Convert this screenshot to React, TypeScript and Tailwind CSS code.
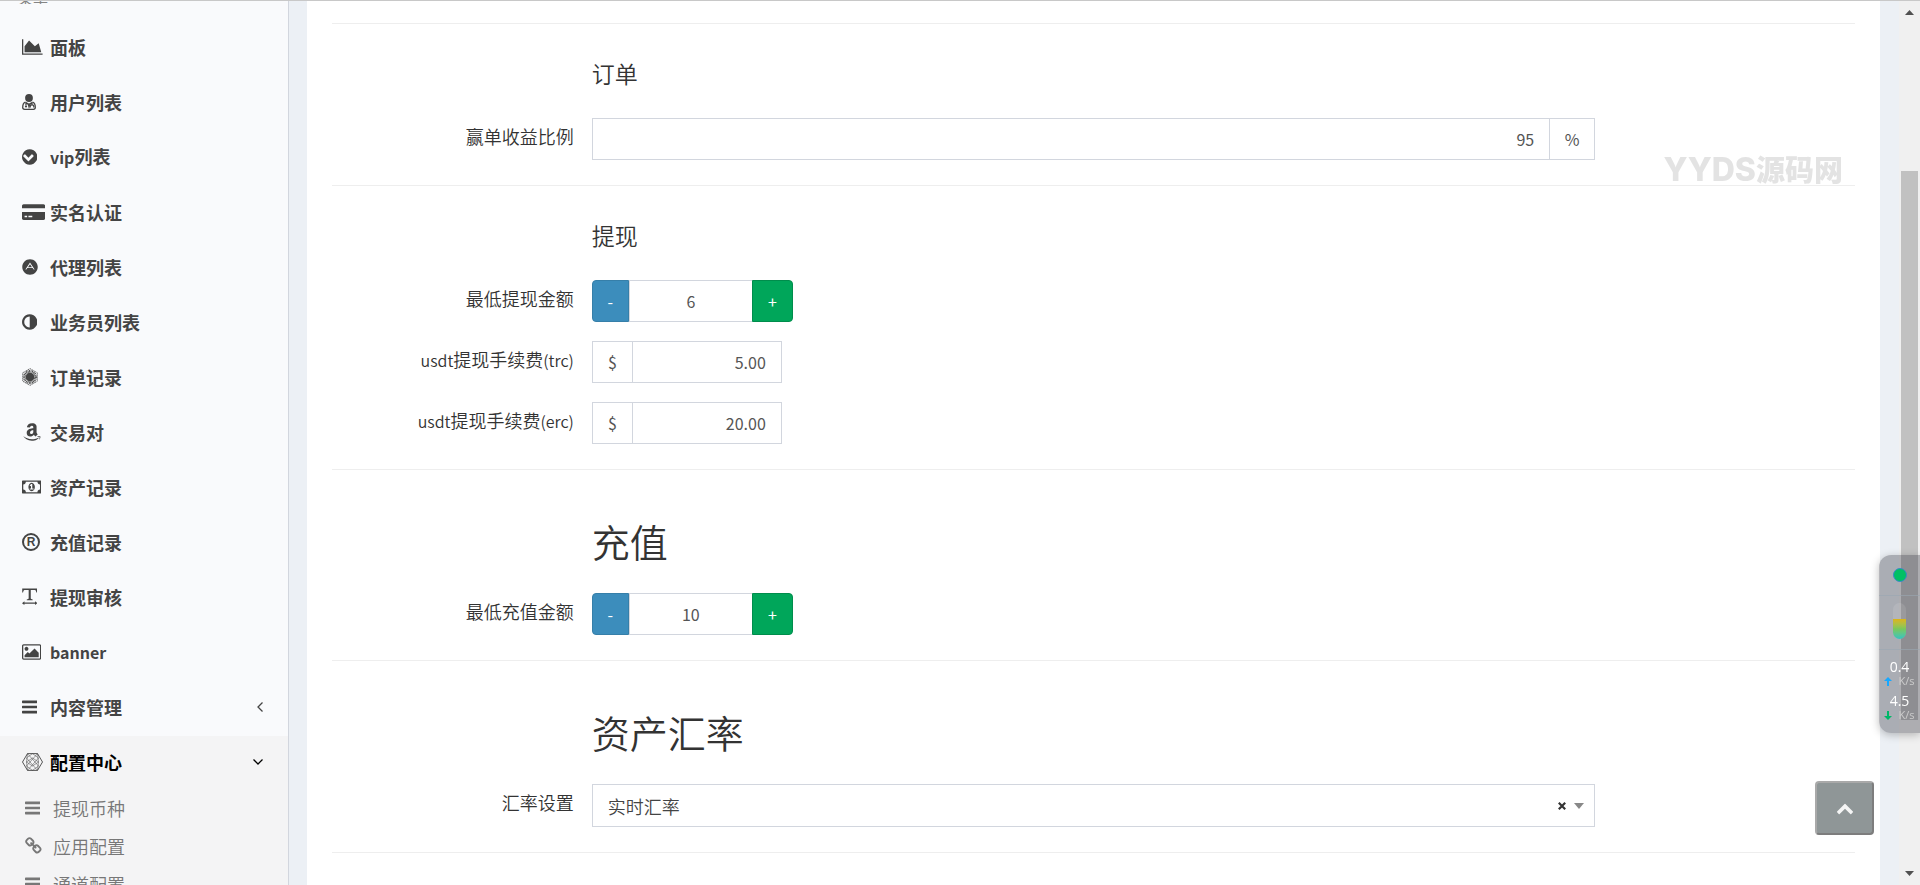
import { useState, type ReactNode } from "react";
import { FaAdn, FaAmazon } from "react-icons/fa";

const glyphs = {
  area: {
    box: "-128 0 2048 1792",
    d: "M1920 1536v128h-2048v-1536h128v1408h1920zm-384-1024l256 896h-1664v-576l448-576 576 576z",
  },
  chevronCircle: {
    box: "128 0 1536 1792",
    d: "M813 1299l454-454q19-19 19-45t-19-45l-102-102q-19-19-45-19t-45 19l-307 307-307-307q-19-19-45-19t-45 19l-102 102q-19 19-19 45t19 45l454 454q19 19 45 19t45-19zm851-403q0 209-103 385.5t-279.5 279.5-385.5 103-385.5-103-279.5-279.5-103-385.5 103-385.5 279.5-279.5 385.5-103 385.5 103 279.5 279.5 103 385.5z",
  },
  card: {
    box: "0 0 2304 1792",
    d: "M0 1536v-640h2304v640q0 66-47 113t-113 47h-1984q-66 0-113-47t-47-113zM640 1408h384v-128h-384v128zM256 1408h256v-128h-256v128zM2144 128q66 0 113 47t47 113v224h-2304v-224q0-66 47-113t113-47z",
  },
  adjust: {
    box: "128 0 1536 1792",
    d: "M896 1440v-1088q-148 0-273 73t-198 198-73 273 73 273 198 198 273 73zm768-544q0 209-103 385.5t-279.5 279.5-385.5 103-385.5-103-279.5-279.5-103-385.5 103-385.5 279.5-279.5 385.5-103 385.5 103 279.5 279.5 103 385.5z",
  },
  money: {
    box: "-64 0 1920 1792",
    d: "M704 1152h384v-96h-128v-448h-114l-148 137 77 80q42-37 55-57h2v288h-128v96zm512-256q0 70-21 142t-59.5 134-101.5 101-138 39-138-39-101.5-101-59.5-134-21-142 21-142 59.5-134 101.5-101 138-39 138 39 101.5 101 59.5 134 21 142zm512 256v-512q-106 0-181-75t-75-181h-1152q0 106-75 181t-181 75v512q106 0 181 75t75 181h1152q0-106 75-181t181-75zm128-832v1152q0 26-19 45t-45 19h-1792q-26 0-45-19t-19-45v-1152q0-26 19-45t45-19h1792q26 0 45 19t19 45z",
  },
  textWidth: {
    box: "128 0 1536 1792",
    d: "M150 60h1490v400h-80q-30-270-130-270h-430v850q0 70 190 100v80h-588v-80q190-30 190-100v-850h-430q-100 0-130 270h-82zM128 1510l240-190v120h1056v-120l240 190-240 190v-120h-1056v120z",
  },
  picture: {
    box: "-64 0 1920 1792",
    d: "M576 576q0 80-56 136t-136 56-136-56-56-136 56-136 136-56 136 56 56 136zm1024 384v448h-1408v-192l320-320 160 160 512-512zm96-704h-1600q-13 0-22.5 9.5t-9.5 22.5v1216q0 13 9.5 22.5t22.5 9.5h1600q13 0 22.5-9.5t9.5-22.5v-1216q0-13-9.5-22.5t-22.5-9.5zm160 32v1216q0 66-47 113t-113 47h-1600q-66 0-113-47t-47-113v-1216q0-66 47-113t113-47h1600q66 0 113 47t47 113z",
  },
  bars: {
    box: "128 0 1536 1792",
    d: "M192 256h1408q64 0 64 64v128q0 64-64 64h-1408q-64 0-64-64v-128q0-64 64-64zM192 768h1408q64 0 64 64v128q0 64-64 64h-1408q-64 0-64-64v-128q0-64 64-64zM192 1280h1408q64 0 64 64v128q0 64-64 64h-1408q-64 0-64-64v-128q0-64 64-64z",
  },
  link: {
    box: "64 0 1664 1792",
    d: "M1520 1216q0-40-28-68l-208-208q-28-28-68-28-42 0-72 32 3 3 19 18.5t21.5 21.5 15 19 13 25.5 3.5 27.5q0 40-28 68t-68 28q-15 0-27.5-3.5t-25.5-13-19-15-21.5-21.5-18.5-19q-33 31-33 73 0 40 28 68l206 207q27 27 68 27 40 0 68-26l147-146q28-28 28-67zm-703-705q0-40-28-68l-206-207q-28-28-68-28-39 0-68 27l-147 146q-28 28-28 67 0 40 28 68l208 208q27 27 68 27 42 0 72-31-3-3-19-18.5t-21.5-21.5-15-19-13-25.5-3.5-27.5q0-40 28-68t68-28q15 0 27.5 3.5t25.5 13 19 15 21.5 21.5 18.5 19q33-31 33-73zm895 705q0 120-85 203l-147 146q-83 83-203 83-121 0-204-85l-206-207q-83-83-83-203 0-123 88-209l-88-88q-86 88-208 88-120 0-204-84l-208-208q-84-84-84-204t85-203l147-146q83-83 203-83 121 0 204 85l206 207q83 83 83 203 0 123-88 209l88 88q86-88 208-88 120 0 204 84l208 208q84 84 84 204z",
  },
  chevronUp: {
    box: "0 0 1792 1792",
    d: "M1683 1331l-166 165q-19 19-45 19t-45-19l-531-531-531 531q-19 19-45 19t-45-19l-166-165q-19-19-19-45.5t19-45.5l742-741q19-19 45-19t45 19l742 741q19 19 19 45.5t-19 45.5z",
  },
};

function Glyph({ name, className = "h-[18px]" }: { name: keyof typeof glyphs; className?: string }) {
  return (
    <svg viewBox={glyphs[name].box} fill="currentColor" fillRule="evenodd" className={`w-auto ${className}`} aria-hidden="true">
      <path d={glyphs[name].d} />
    </svg>
  );
}

function DoctorIcon() {
  return (
    <svg viewBox="0 0 14 16" className="h-4 w-3.5" fill="none" stroke="currentColor" strokeWidth="1.3">
      <circle cx="7" cy="4" r="3.9" fill="currentColor" stroke="none" />
      <path d="M3.4 8.2C1.500 8.800 0.700 10.800 0.700 13.500c0 1.200 0.800 1.800 1.900 1.800h8.800c1.100 0 1.900-0.600 1.900-1.800 0-2.700-0.800-4.700-2.700-5.300" />
      <path d="M3.4 8.400l3.600 2 3.600-2M4 8.500v3M10 8.500v2.500M8.200 13.500v-1.200c0-1 0.800-1.500 1.800-1.500s1.800 0.500 1.800 1.500v1.200" />
      <circle cx="4" cy="12.500" r="1.100" fill="currentColor" stroke="none" />
      <path d="M5.500 10l1.500 5 1.500-5z" fill="currentColor" stroke="none" />
    </svg>
  );
}

function OrderIcon() {
  return (
    <svg viewBox="0 0 16 18" className="h-[18px] w-4" fill="none" stroke="currentColor">
      <path d="M8 0.600l7.300 4.200v8.400L8 17.400 0.700 13.200V4.800z" strokeWidth="0.8" strokeDasharray="1.400 0.600" />
      <circle cx="8" cy="9" r="5.600" strokeWidth="2.600" strokeDasharray="0.900 0.560" />
      <circle cx="8" cy="9" r="4.300" fill="currentColor" stroke="none" />
    </svg>
  );
}

function MeshIcon() {
  return (
    <svg viewBox="0 0 21 18" className="h-[18px] w-[21px]" fill="none" stroke="currentColor" strokeWidth="0.700">
      <path d="M5.500 0.600h10L20.500 9l-5 8.400h-10L0.500 9z" strokeWidth="0.900" />
      <path d="M5.500 0.600L4.500 9l1 8.400M15.500 0.600L16.500 9l-1 8.400M4.500 5l6-4.400 6 4.400M4.500 13l6 4.400 6-4.400" strokeWidth="0.500" />
      <path d="M5.500 0.600l11 12.400M15.500 0.600L4.500 13M4.500 5l11 12.400M16.500 5L5.500 17.400M4.500 9l6-4 6 4-6 4z" strokeWidth="0.500" />
    </svg>
  );
}

function RegisteredIcon() {
  return (
    <span className="flex size-[18px] items-center justify-center rounded-full border-2 border-[#444] font-['Liberation_Sans',sans-serif] text-[12px] leading-none font-bold">
      R
    </span>
  );
}

const menuItems: { title: string; icon: ReactNode; arrow?: boolean }[] = [
  { title: "面板", icon: <Glyph name="area" /> },
  { title: "用户列表", icon: <DoctorIcon /> },
  { title: "vip列表", icon: <Glyph name="chevronCircle" /> },
  { title: "实名认证", icon: <Glyph name="card" /> },
  { title: "代理列表", icon: <FaAdn className="size-4" /> },
  { title: "业务员列表", icon: <Glyph name="adjust" /> },
  { title: "订单记录", icon: <OrderIcon /> },
  { title: "交易对", icon: <FaAmazon className="h-5 w-auto" /> },
  { title: "资产记录", icon: <Glyph name="money" /> },
  { title: "充值记录", icon: <RegisteredIcon /> },
  { title: "提现审核", icon: <Glyph name="textWidth" /> },
  { title: "banner", icon: <Glyph name="picture" /> },
  { title: "内容管理", icon: <Glyph name="bars" />, arrow: true },
];

const subItems: { title: string; icon: ReactNode }[] = [
  { title: "提现币种", icon: <Glyph name="bars" /> },
  { title: "应用配置", icon: <Glyph name="link" /> },
  { title: "通道配置", icon: <Glyph name="bars" /> },
];

// latin letters run one step smaller than the hanzi beside them
function Mixed({ text }: { text: string }) {
  return (
    <span>
      {text.split(/([\x20-\x7e]+)/).map((part, i) =>
        i % 2 ? <span key={i} className="text-[16px]">{part}</span> : part
      )}
    </span>
  );
}

function Sidebar() {
  return (
    <aside className="w-[289px] shrink-0 overflow-hidden border-r border-[#d2d6de] bg-[#f9fafc]">
      <div className="h-5">
        <div className="flex h-[3px] items-end overflow-hidden pl-[18px] text-[15px] leading-3 text-[#848484]">菜单</div>
      </div>
      <nav>
        <ul>
          {menuItems.map((item) => (
            <li key={item.title}>
              <a href="#" className="flex h-[55px] items-center pr-[25px] pb-1 pl-[22px] font-bold text-[#444]">
                <span className="w-7 shrink-0">{item.icon}</span>
                <Mixed text={item.title} />
                {item.arrow && (
                  <svg viewBox="0 0 6 10" className="ml-auto h-2.5 w-1.5" fill="none" stroke="currentColor" strokeWidth="1.3">
                    <path d="M5.5 0.5L1 5l4.5 4.5" />
                  </svg>
                )}
              </a>
            </li>
          ))}
          <li className="bg-[#f4f4f5]">
            <a href="#" className="flex h-[55px] items-center pr-[25px] pb-1 pl-[22px] font-bold text-black">
              <span className="w-7 shrink-0 text-[#444]">
                <MeshIcon />
              </span>
              <span>配置中心</span>
              <svg viewBox="0 0 10 6" className="ml-auto h-1.5 w-2.5" fill="none" stroke="currentColor" strokeWidth="1.3">
                <path d="M0.5 0.5L5 5l4.5-4.5" />
              </svg>
            </a>
            <ul>
              {subItems.map((item) => (
                <li key={item.title}>
                  <a href="#" className="flex h-[38px] items-center pb-1 pl-[25px] font-[350] text-[#777]">
                    <span className="w-7 shrink-0">{item.icon}</span>
                    <span>{item.title}</span>
                  </a>
                </li>
              ))}
            </ul>
          </li>
        </ul>
      </nav>
    </aside>
  );
}

function Row({ label, id, children }: { label: string; id: string; children: ReactNode }) {
  return (
    <div className="grid grid-cols-12">
      <label htmlFor={id} className="col-span-2 pt-[5px] pr-0.5 text-right font-[350] text-[#333]">
        <Mixed text={label} />
      </label>
      <div className="col-span-8 px-4">{children}</div>
    </div>
  );
}

function Section({ title, large = false, children }: { title: string; large?: boolean; children: ReactNode }) {
  return (
    <section className={`mx-[15px] border-b border-[#eee] pb-[25px] ${large ? "pt-[46px]" : "pt-8"}`}>
      <div className="-mx-[15px]">
        <div className="grid grid-cols-12">
          <h4
            className={`col-span-8 col-start-3 px-4 font-[350] text-[#333] ${
              large ? "mb-[27px] text-[38px] leading-[50px]" : "mb-7 text-[23px] leading-[34px]"
            }`}
          >
            {title}
          </h4>
        </div>
        <div className="flex flex-col gap-[19px]">{children}</div>
      </div>
    </section>
  );
}

const fieldText = "text-[16px] text-[#555]";

function Stepper({ id, initial }: { id: string; initial: number }) {
  const [value, setValue] = useState(initial);
  return (
    <div className="flex h-[42px] w-[201px] text-[16px]">
      <button
        type="button"
        onClick={() => setValue(value - 1)}
        className="w-[37px] shrink-0 rounded-l-[4px] border border-[#367fa9] bg-[#3c8dbc] text-white"
      >
        -
      </button>
      <input
        id={id}
        value={value}
        onChange={(e) => setValue(Number(e.target.value) || 0)}
        className={`min-w-0 flex-1 border-y border-l border-[#d2d6de] bg-white text-center ${fieldText}`}
      />
      <button
        type="button"
        onClick={() => setValue(value + 1)}
        className="w-[41px] shrink-0 rounded-r-[4px] border border-[#008d4c] bg-[#00a65a] text-white"
      >
        +
      </button>
    </div>
  );
}

function FeeInput({ id, value }: { id: string; value: string }) {
  return (
    <div className="flex h-[42px] w-[190px] border border-[#d2d6de]">
      <span className={`flex w-10 shrink-0 items-center justify-center border-r border-[#d2d6de] ${fieldText}`}>$</span>
      <input id={id} defaultValue={value} className={`min-w-0 flex-1 bg-white pr-[15px] text-right ${fieldText}`} />
    </div>
  );
}

function RateSelect() {
  return (
    <div className="relative">
      <select
        id="rate"
        className="h-[43px] w-full appearance-none border border-[#d2d6de] bg-white px-[15px] font-[350] text-[#444]"
      >
        <option>实时汇率</option>
      </select>
      <div className="pointer-events-none absolute inset-y-0 right-[11px] flex items-center gap-2">
        <svg viewBox="0 0 8 8" className="size-2" stroke="#333" strokeWidth="2.2">
          <path d="M0.8 0.8l6.4 6.4M7.2 0.8L0.8 7.2" />
        </svg>
        <svg viewBox="0 0 10 6" className="h-1.5 w-2.5" fill="#888">
          <path d="M0 0h10L5 6z" />
        </svg>
      </div>
    </div>
  );
}

function Scrollbar() {
  return (
    <div className="flex w-[21px] shrink-0 flex-col items-center bg-[#f0f0f0] py-[9px]">
      <svg viewBox="0 0 9 5" className="h-[5px] w-[9px]" fill="#505050">
        <path d="M4.5 0L9 5H0z" />
      </svg>
      <div className="mt-[156px] h-[549px] w-[17px] bg-[#c1c1c1]" />
      <svg viewBox="0 0 9 5" className="mt-auto h-[5px] w-[9px]" fill="#505050">
        <path d="M4.5 5L9 0H0z" />
      </svg>
    </div>
  );
}

function NetSpeed({ value, up = false }: { value: string; up?: boolean }) {
  return (
    <div className="flex flex-col items-center text-white">
      <span className="text-[14px] leading-4">{value}</span>
      <span className="flex items-center gap-1.5 text-[11px] leading-3 text-[#ccc]">
        <svg viewBox="0 0 8 9" className="h-[9px] w-2" fill={up ? "#18a8ff" : "#00b868"}>
          {up ? <path d="M4 0l4 4H5v5H3V4H0z" /> : <path d="M4 9L0 5h3V0h2v5h3z" />}
        </svg>
        K/s
      </span>
    </div>
  );
}

function SpeedWidget() {
  return (
    <div className="fixed top-[555px] right-0 flex h-[178px] w-[41px] flex-col items-center rounded-l-xl bg-[rgba(50,50,60,0.35)] pt-[13px] font-['Open_Sans',sans-serif] shadow-[0_2px_8px_rgba(0,0,0,0.25)]">
      <span className="size-3.5 rounded-full border border-[#3a86c8] bg-[#00c064]" />
      <span className="mt-[13px] h-px w-full bg-[#9aa6b0]/60" />
      <span className="mt-[7px] flex h-9 w-[13px] items-end overflow-hidden rounded-full bg-white/10">
        <span className="h-5 w-full bg-linear-to-b from-[#dcb414] via-[#78c85a] to-[#32c3be]" />
      </span>
      <span className="mt-2.5 mb-[9px] h-px w-full bg-[#9aa6b0]/60" />
      <div className="flex flex-col gap-1.5">
        <NetSpeed value="0.4" up />
        <NetSpeed value="4.5" />
      </div>
    </div>
  );
}

export default function App() {
  return (
    <div className="flex h-screen overflow-hidden border-t border-[#c8c8c8] bg-[#ecf0f5] font-['Noto_Sans_CJK_SC',sans-serif] text-[18px] leading-[26px]">
      <Sidebar />
      <main className="min-w-0 flex-1 overflow-hidden pr-[19px] pl-[18px]">
        <form className="min-h-full bg-white px-[10px]">
          <div className="mx-[15px] h-[23px] border-b border-[#eee]" />
          <Section title="订单">
            <Row label="赢单收益比例" id="ratio">
              <div className="flex h-[42px] border border-[#d2d6de]">
                <input id="ratio" defaultValue="95" className={`min-w-0 flex-1 bg-white pr-[15px] text-right ${fieldText}`} />
                <span className={`flex w-[45px] shrink-0 items-center justify-center border-l border-[#d2d6de] ${fieldText}`}>%</span>
              </div>
            </Row>
          </Section>
          <Section title="提现">
            <Row label="最低提现金额" id="min-withdraw">
              <Stepper id="min-withdraw" initial={6} />
            </Row>
            <Row label="usdt提现手续费(trc)" id="fee-trc">
              <FeeInput id="fee-trc" value="5.00" />
            </Row>
            <Row label="usdt提现手续费(erc)" id="fee-erc">
              <FeeInput id="fee-erc" value="20.00" />
            </Row>
          </Section>
          <Section title="充值" large>
            <Row label="最低充值金额" id="min-recharge">
              <Stepper id="min-recharge" initial={10} />
            </Row>
          </Section>
          <Section title="资产汇率" large>
            <Row label="汇率设置" id="rate">
              <RateSelect />
            </Row>
          </Section>
        </form>
      </main>
      <Scrollbar />

      <div className="pointer-events-none fixed top-[147px] right-[77px] text-[29px] leading-[42px] font-black text-[#e3e3e3]">
        <span className="font-['Inter',sans-serif] text-[32px] font-extrabold">YYDS</span>源码网
      </div>
      <button
        type="button"
        aria-label="返回顶部"
        className="fixed right-[46px] bottom-[50px] flex h-[54px] w-[59px] items-center justify-center rounded-[4px] border-2 border-t-[#a9a9a9] border-r-[#7d7d7d] border-b-[#7d7d7d] border-l-[#a9a9a9] bg-[#8f9697] text-[#f5f5f5]"
      >
        <Glyph name="chevronUp" />
      </button>
      <SpeedWidget />
    </div>
  );
}
